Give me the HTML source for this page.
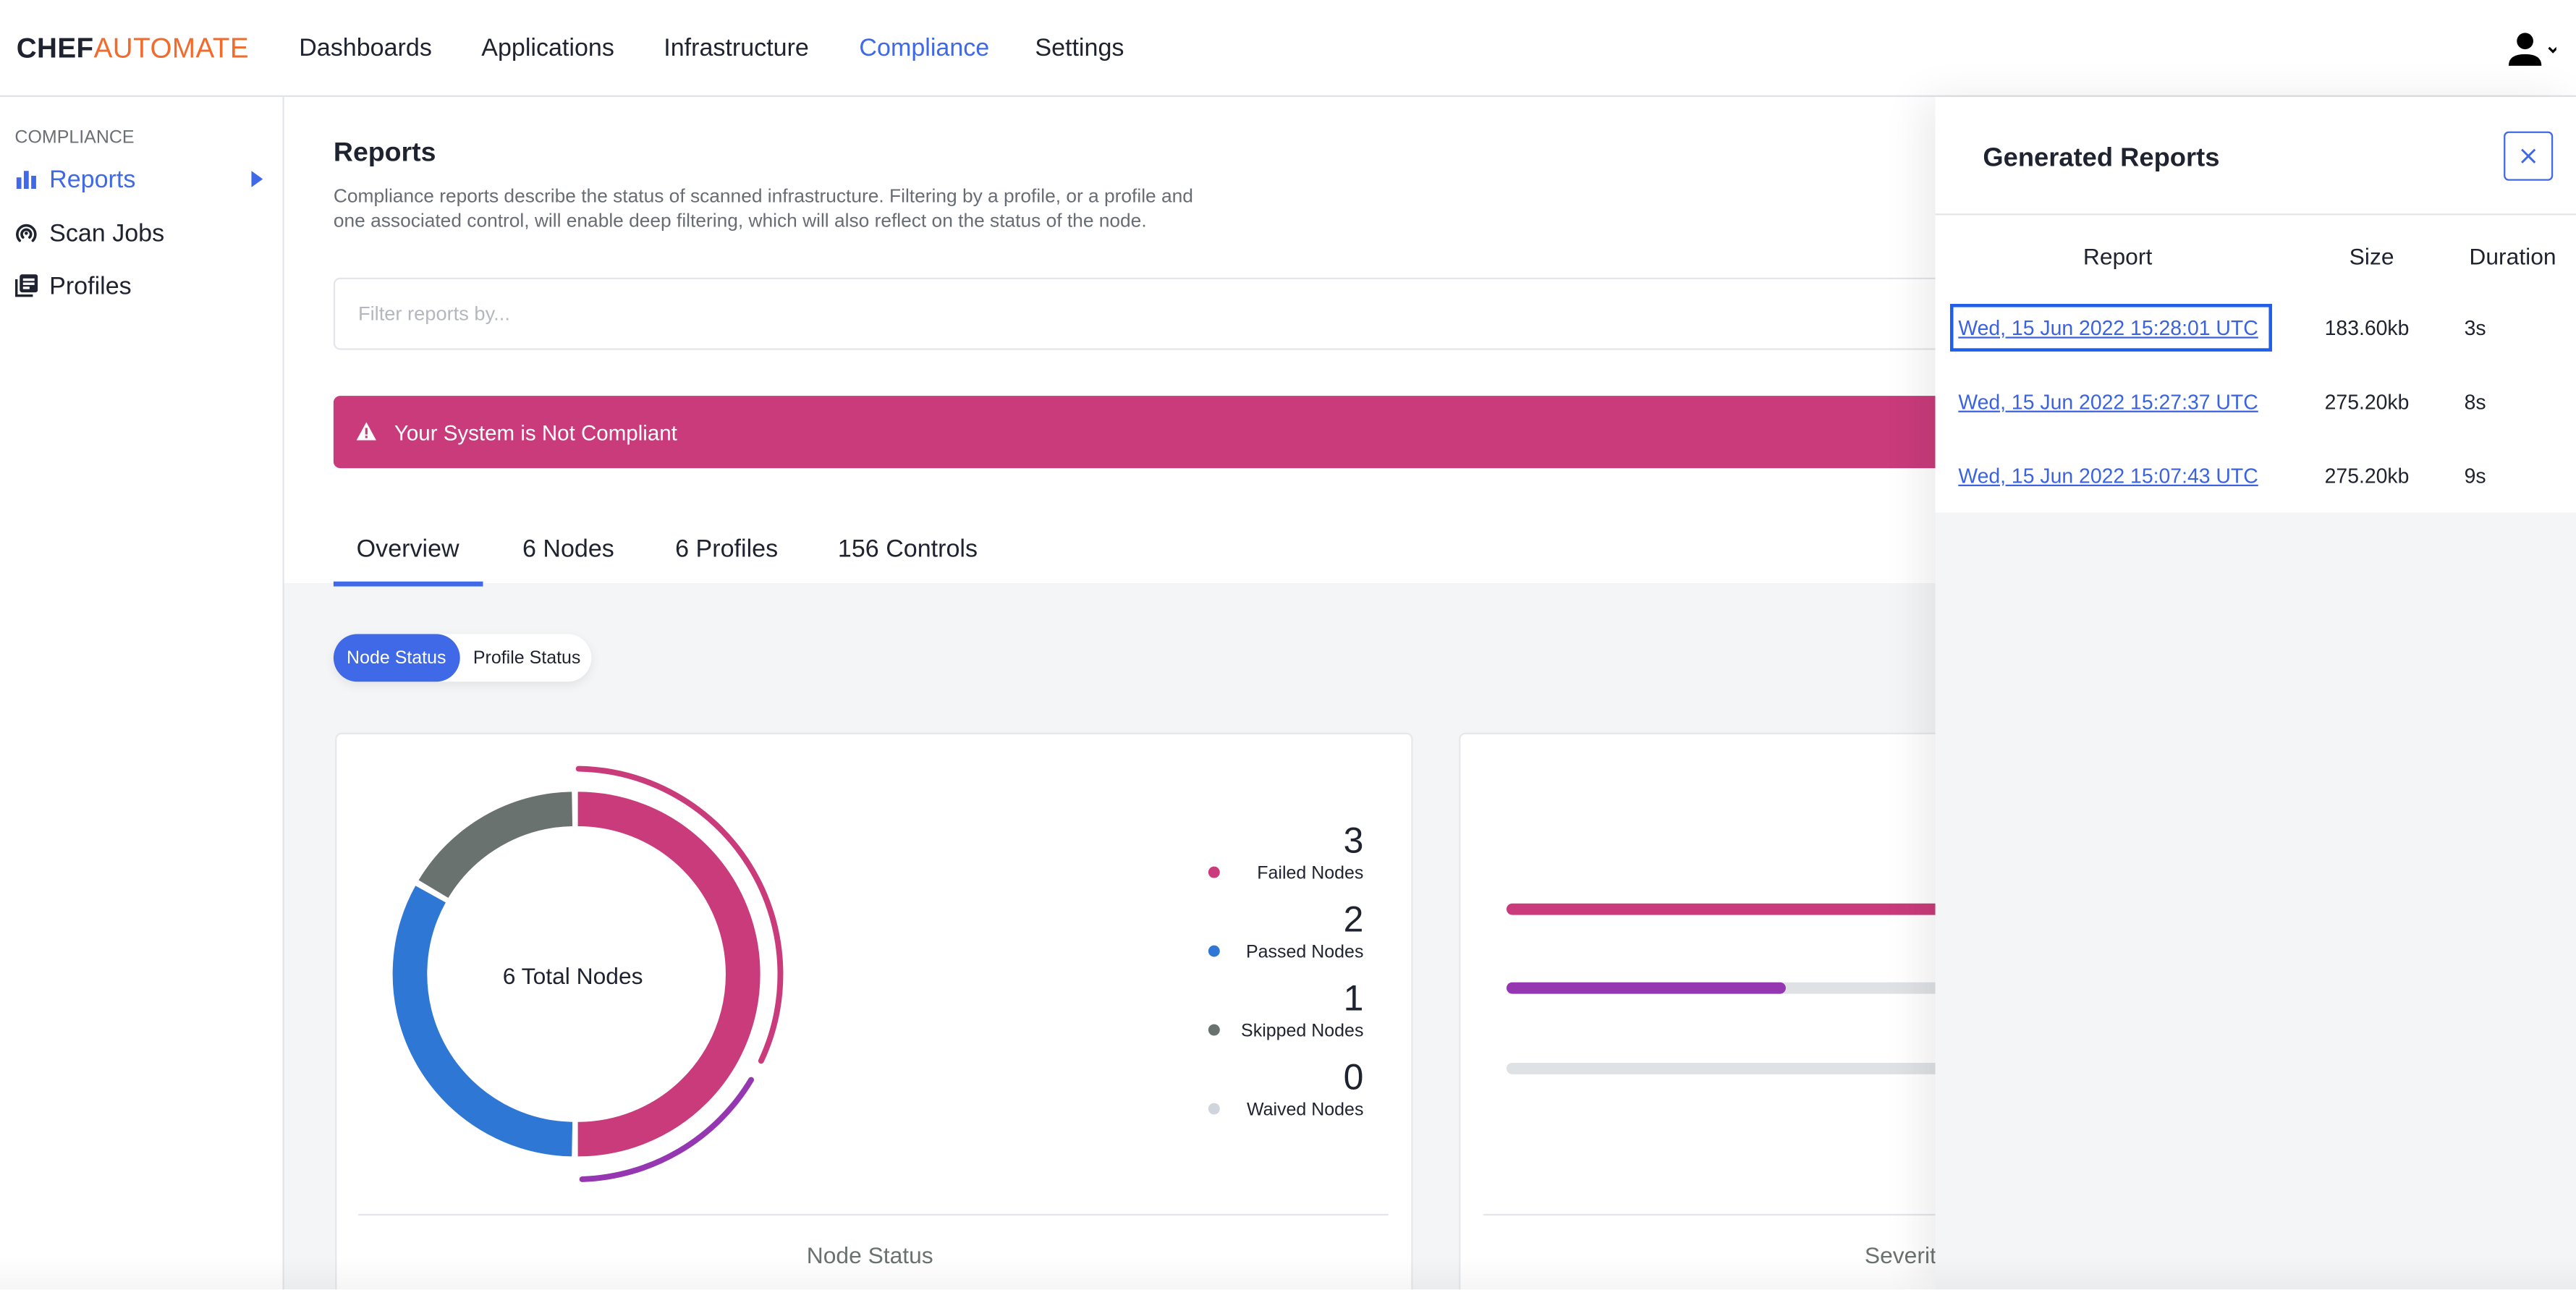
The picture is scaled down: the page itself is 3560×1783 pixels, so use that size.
<!DOCTYPE html>
<html><head><meta charset="utf-8">
<style>
*{box-sizing:border-box;margin:0;padding:0}
html,body{width:3560px;height:1783px;overflow:hidden;background:#fff}
#s{position:absolute;left:0;top:0;width:1568px;height:785px;transform:scale(2.270408);transform-origin:0 0;font-family:"Liberation Sans",sans-serif;color:#1f2330;overflow:hidden;background:#f4f5f7}
.a{position:absolute;white-space:nowrap}
.hdr{left:0;top:0;width:1568px;height:59px;background:#fff;border-bottom:1px solid #dfe2e6}
.nav{top:21px;font-size:15px;color:#1f2330}
.side{left:0;top:59px;width:173px;height:726px;background:#fff;border-right:1px solid #e3e5e9}
.main{left:173px;top:59px;width:1005px;height:296px;background:#fff}
.lnk{color:#3b63e0;text-decoration:underline;font-size:12.5px}
.lg{font-size:11px;line-height:12px;display:block;margin-top:1px}
</style></head><body><div id="s">
<div class="a hdr"></div>
<div class="a" style="left:10px;top:20px;font-size:17px;letter-spacing:0.2px"><b style="color:#1f2330">CHEF</b><span style="color:#f26b2b">AUTOMATE</span></div>
<div class="a nav" style="left:182px">Dashboards</div>
<div class="a nav" style="left:293px">Applications</div>
<div class="a nav" style="left:404px">Infrastructure</div>
<div class="a nav" style="left:523px;color:#4069e8">Compliance</div>
<div class="a nav" style="left:630px">Settings</div>
<svg class="a" style="left:1526px;top:18px" width="30" height="24" viewBox="0 0 30 24"><circle cx="11" cy="7" r="5" fill="#000"/><path d="M1 22 Q1 15 11 15 Q21 15 21 22Z" fill="#000"/><path d="M25.5 11 L28 13.5 L30.5 11" stroke="#000" stroke-width="1.4" fill="none"/></svg>

<div class="a side"></div>
<div class="a" style="left:9px;top:78px;font-size:11px;color:#6b6f76">COMPLIANCE</div>
<svg class="a" style="left:10px;top:104px" width="12" height="11"><rect x="0" y="4" width="3" height="7" fill="#4069e8"/><rect x="4.5" y="0" width="3" height="11" fill="#4069e8"/><rect x="9" y="3" width="3" height="8" fill="#4069e8"/></svg>
<div class="a" style="left:30px;top:101px;font-size:15px;color:#4069e8">Reports</div>
<svg class="a" style="left:153px;top:104px" width="8" height="10"><path d="M0 0L7 5L0 10Z" fill="#4069e8"/></svg>
<svg class="a" style="left:9px;top:135px" width="14" height="14" viewBox="0 0 14 14"><path d="M3 11.5A5.5 5.5 0 1 1 11 11.5" stroke="#1f2330" stroke-width="1.6" fill="none" stroke-linecap="round"/><path d="M5 9.5A2.8 2.8 0 1 1 9 9.5" stroke="#1f2330" stroke-width="1.6" fill="none" stroke-linecap="round"/><circle cx="7" cy="7" r="1" fill="#1f2330"/></svg>
<div class="a" style="left:30px;top:134px;font-size:15px">Scan Jobs</div>
<svg class="a" style="left:9px;top:167px" width="14" height="14" viewBox="0 0 14 14"><rect x="3" y="0" width="11" height="11" rx="1.5" fill="#1f2330"/><rect x="5" y="2.5" width="7" height="1.5" fill="#fff"/><rect x="5" y="5" width="7" height="1.5" fill="#fff"/><rect x="5" y="7.5" width="4" height="1.5" fill="#fff"/><path d="M1 3V13H11" stroke="#1f2330" stroke-width="1.5" fill="none"/></svg>
<div class="a" style="left:30px;top:166px;font-size:15px">Profiles</div>

<div class="a main"></div>
<div class="a" style="left:203px;top:84px;font-size:16.5px;font-weight:bold">Reports</div>
<div class="a" style="left:203px;top:112px;font-size:11.6px;color:#686d75;line-height:15px">Compliance reports describe the status of scanned infrastructure. Filtering by a profile, or a profile and<br>one associated control, will enable deep filtering, which will also reflect on the status of the node.</div>
<div class="a" style="left:203px;top:169px;width:1000px;height:44px;border:1px solid #e3e5e9;border-radius:4px;background:#fff"></div>
<div class="a" style="left:218px;top:184px;font-size:12px;color:#b4b8be">Filter reports by...</div>
<div class="a" style="left:203px;top:241px;width:1000px;height:44px;background:#c93b7b;border-radius:4px"></div>
<svg class="a" style="left:217px;top:257px" width="12" height="11"><path d="M6 0L12 11H0Z" fill="#fff"/><rect x="5.3" y="3.5" width="1.4" height="4" fill="#c93b7b"/><rect x="5.3" y="8.3" width="1.4" height="1.4" fill="#c93b7b"/></svg>
<div class="a" style="left:240px;top:256px;font-size:13px;color:#fff">Your System is Not Compliant</div>
<div class="a" style="left:217px;top:326px;font-size:15px">Overview</div>
<div class="a" style="left:318px;top:326px;font-size:15px">6 Nodes</div>
<div class="a" style="left:411px;top:326px;font-size:15px">6 Profiles</div>
<div class="a" style="left:510px;top:326px;font-size:15px">156 Controls</div>
<div class="a" style="left:203px;top:354px;width:91px;height:3px;background:#4069e8"></div>

<div class="a" style="left:203px;top:386px;width:157px;height:29px;background:#fff;border-radius:15px;box-shadow:0 2px 6px rgba(0,0,0,.08)"></div>
<div class="a" style="left:203px;top:386px;width:77px;height:29px;background:#4069e8;border-radius:15px"></div>
<div class="a" style="left:211px;top:395px;font-size:11px;color:#fff">Node Status</div>
<div class="a" style="left:288px;top:395px;font-size:11px;color:#1f2330">Profile Status</div>

<div class="a" style="left:204px;top:446px;width:656px;height:360px;background:#fff;border:1px solid #e6e8eb;border-radius:4px"></div>
<svg class="a" style="left:0;top:0" width="1568" height="785">
<g fill="none" stroke-width="21">
<path d="M351.75 492.5A100.5 100.5 0 0 1 351.75 693.5" stroke="#c93b7b"/>
<path d="M348.25 693.5A100.5 100.5 0 0 1 262.1 544.3" stroke="#2e77d4"/>
<path d="M263.85 541.2A100.5 100.5 0 0 1 348.25 492.5" stroke="#6a7270"/>
</g>
<g fill="none" stroke-width="3.5" stroke-linecap="round">
<path d="M352.2 468A125 125 0 0 1 463.3 645.8" stroke="#c93b7b"/>
<path d="M457.2 657.4A125 125 0 0 1 354.4 717.9" stroke="#9437b0"/>
</g>
<circle cx="739" cy="531" r="3.5" fill="#c93b7b"/>
<circle cx="739" cy="579" r="3.5" fill="#2e77d4"/>
<circle cx="739" cy="627" r="3.5" fill="#6a7270"/>
<circle cx="739" cy="675" r="3.5" fill="#cfd5db"/>
</svg>
<div class="a" style="left:306px;top:586px;font-size:14px">6 Total Nodes</div>
<div class="a" style="left:700px;top:499px;width:130px;text-align:right;font-size:22px;line-height:26px">3<br><span class="lg">Failed Nodes</span></div>
<div class="a" style="left:700px;top:547px;width:130px;text-align:right;font-size:22px;line-height:26px">2<br><span class="lg">Passed Nodes</span></div>
<div class="a" style="left:700px;top:595px;width:130px;text-align:right;font-size:22px;line-height:26px">1<br><span class="lg">Skipped Nodes</span></div>
<div class="a" style="left:700px;top:643px;width:130px;text-align:right;font-size:22px;line-height:26px">0<br><span class="lg">Waived Nodes</span></div>
<div class="a" style="left:218px;top:739px;width:627px;height:1px;background:#e3e5e9"></div>
<div class="a" style="left:491px;top:756px;font-size:14px;color:#6a7270">Node Status</div>

<div class="a" style="left:888px;top:446px;width:700px;height:360px;background:#fff;border:1px solid #e6e8eb;border-radius:4px"></div>
<div class="a" style="left:917px;top:550px;width:300px;height:7px;background:#c93b7b;border-radius:4px"></div>
<div class="a" style="left:917px;top:598px;width:300px;height:7px;background:#dfe2e5;border-radius:4px"></div>
<div class="a" style="left:917px;top:598px;width:170px;height:7px;background:#9437b0;border-radius:4px"></div>
<div class="a" style="left:917px;top:647px;width:300px;height:7px;background:#dfe2e5;border-radius:4px"></div>
<div class="a" style="left:903px;top:739px;width:600px;height:1px;background:#e3e5e9"></div>
<div class="a" style="left:1135px;top:756px;font-size:14px;color:#6a7270">Severity</div>

<div class="a" style="left:1178px;top:59px;width:390px;height:726px;background:#f4f5f7;box-shadow:-8px 0 24px rgba(0,0,0,.08)"></div>
<div class="a" style="left:1178px;top:59px;width:390px;height:253px;background:#fff"></div>
<div class="a" style="left:1178px;top:130px;width:390px;height:1px;background:#e3e5e9"></div>
<div class="a" style="left:1207px;top:88px;font-size:16px;font-weight:bold;color:#1f2330">Generated Reports</div>
<div class="a" style="left:1524px;top:80px;width:30px;height:30px;border:1px solid #4069e8;border-radius:3px;background:#fff"></div>
<svg class="a" style="left:1534px;top:90px" width="10" height="10"><path d="M1 1L9 9M9 1L1 9" stroke="#4069e8" stroke-width="1.3"/></svg>
<div class="a" style="left:1268px;top:148px;font-size:14px">Report</div>
<div class="a" style="left:1430px;top:148px;font-size:14px">Size</div>
<div class="a" style="left:1503px;top:148px;font-size:14px">Duration</div>
<div class="a" style="left:1187px;top:185px;width:196px;height:29px;border:2.5px solid #1f5fe8"></div>
<div class="a lnk" style="left:1192px;top:193px">Wed, 15 Jun 2022 15:28:01 UTC</div>
<div class="a lnk" style="left:1192px;top:238px">Wed, 15 Jun 2022 15:27:37 UTC</div>
<div class="a lnk" style="left:1192px;top:283px">Wed, 15 Jun 2022 15:07:43 UTC</div>
<div class="a" style="left:1415px;top:193px;font-size:12.5px">183.60kb</div>
<div class="a" style="left:1415px;top:238px;font-size:12.5px">275.20kb</div>
<div class="a" style="left:1415px;top:283px;font-size:12.5px">275.20kb</div>
<div class="a" style="left:1500px;top:193px;font-size:12.5px">3s</div>
<div class="a" style="left:1500px;top:238px;font-size:12.5px">8s</div>
<div class="a" style="left:1500px;top:283px;font-size:12.5px">9s</div>
<div class="a" style="left:0;top:765px;width:1568px;height:20px;background:linear-gradient(rgba(0,0,0,0),rgba(0,0,0,.04))"></div>
</div></body></html>
